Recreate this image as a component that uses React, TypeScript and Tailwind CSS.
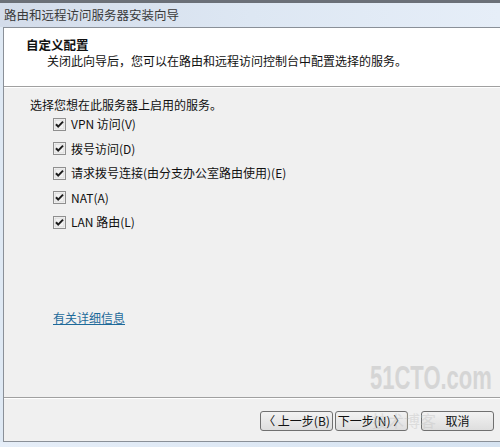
import React from "react";

const font = { fontFamily: '"Noto Sans CJK SC", "Liberation Sans", sans-serif' };

function Check() {
  return (
    <svg width="13" height="13" viewBox="0 0 13 13" className="shrink-0">
      <rect x="0.5" y="0.5" width="12" height="12" fill="#fff" stroke="#8f8f8f" />
      <rect x="2" y="2" width="9" height="9" fill="#f2f2f2" stroke="#d8d8d8" strokeWidth="1" />
      <path d="M3 6.2 L5.2 8.6 L10 3.6" fill="none" stroke="#1c1c1c" strokeWidth="2" />
    </svg>
  );
}

function Row({ label }: { label: string }) {
  return (
    <div className="flex items-center h-[24.5px] gap-[5px]">
      <Check />
      <span className="text-[12px] leading-[16px] text-[#111]">{label}</span>
    </div>
  );
}

const btn =
  "w-[73px] h-[20px] border border-[#707070] rounded-[3px] bg-gradient-to-b from-[#f2f2f2] to-[#dedede] text-[12px] leading-[16px] text-[#111]";

export default function App() {
  return (
    <div className="relative w-[500px] h-[447px] overflow-hidden bg-[#dfe9f4] flex flex-col" style={font}>
      <div className="h-[3px] bg-[#6b7078]" />
      <div className="h-[24px] flex items-center pl-[4px] text-[12.5px] text-[#3a3a3a] bg-gradient-to-r from-[#d3dcea] via-[#dde7f3] to-[#e6eef8]">
        路由和远程访问服务器安装向导
      </div>
      <div className="ml-[3px] flex flex-col border-l border-t border-b border-[#8a9098] h-[415px] bg-[#f0f0f0]">
        <div className="h-[59px] bg-white border-b border-[#a0a0a0] pt-[9px]">
          <div className="pl-[22px] text-[12.5px] leading-[16px] font-bold text-[#111]">自定义配置</div>
          <div className="pl-[43px] text-[12px] leading-[16px] text-[#111]">
            关闭此向导后，您可以在路由和远程访问控制台中配置选择的服务。
          </div>
        </div>
        <div className="h-[311px] border-t border-white border-b border-b-[#a0a0a0] pt-[9px] flex flex-col text-[12px] leading-[16px]">
          <div className="pl-[26px] text-[#111]">选择您想在此服务器上启用的服务。</div>
          <div className="pl-[49px] mt-[-1px] flex flex-col">
            <Row label="VPN 访问(V)" />
            <Row label="拨号访问(D)" />
            <Row label="请求拨号连接(由分支办公室路由使用)(E)" />
            <Row label="NAT(A)" />
            <Row label="LAN 路由(L)" />
          </div>
          <div className="pl-[49px] mt-[75px] h-[16px]">
            <span className="text-[#1e6a9a] underline">有关详细信息</span>
          </div>
        </div>
        <div className="flex-1 border-t border-white flex items-start justify-end pt-[12px] pr-[6px]">
          <div className="flex gap-[2px]">
            <button className={btn}>〈 上一步(B)</button>
            <button className={btn}>下一步(N) 〉</button>
          </div>
          <button className={"ml-[13px] " + btn}>取消</button>
        </div>
      </div>
      <div className="flex-1 bg-gradient-to-r from-[#e6eef8] to-[#d6e3f1]" />
      <div
        className="absolute left-[370px] top-[360px] text-[22px] font-bold leading-[24px] text-[#c4c4c4] opacity-60 tracking-[0px] scale-y-150 origin-top pointer-events-none"
        style={{ fontFamily: '"Liberation Sans", sans-serif' }}
      >
        51CTO.com
      </div>
      <div className="absolute left-[372px] top-[411px] text-[16px] leading-[18px] text-[#c0c0c0] opacity-40 pointer-events-none">
        技术博客
      </div>
    </div>
  );
}
